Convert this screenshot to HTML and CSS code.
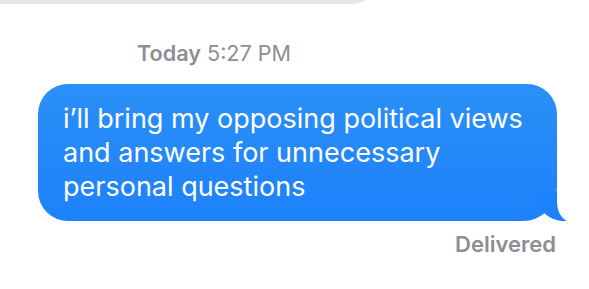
FILE: index.html
```html
<!DOCTYPE html>
<html>
<head>
<meta charset="utf-8">
<link rel="stylesheet" href="styles.css">
</head>
<body>
<div class="thread">
  <div class="prev-wrap"><div class="prev"></div></div>
  <div class="stamp"><b>Today</b> 5:27 PM</div>
  <div class="row">
    <div class="bubble">
      <p class="text">i’ll bring my opposing political views and answers for unnecessary personal questions</p>
      <svg class="tail" width="30" height="30" viewBox="0 0 30 30"><path d="M8 0 L18 0 L18 10 C18 20 22 27 28 30 C21 30.6 12 28.5 5 22 L0 10 Z" fill="#1d81fb"/></svg>
    </div>
  </div>
  <div class="status">Delivered</div>
</div>
</body>
</html>
```
FILE: styles.css
```css
html, body {
  margin: 0;
  background: #ffffff;
}
.thread {
  width: 589px;
  height: 289px;
  overflow: hidden;
  font-family: "Inter", "Liberation Sans", sans-serif;
}
.prev-wrap {
  height: 4px;
  overflow: hidden;
  display: flex;
  align-items: flex-end;
}
.prev {
  flex: none;
  width: 378px;
  height: 40px;
  background: #e6e6eb;
  border-bottom-right-radius: 26px;
}
.stamp {
  margin-top: 37px;
  padding-left: 137px;
  font-size: 21.6px;
  line-height: 24px;
  color: #8e8e93;
}
.stamp b {
  font-weight: 600;
}
.row {
  margin-top: 19px;
  padding-left: 38px;
}
.bubble {
  position: relative;
  width: 519px;
  box-sizing: border-box;
  padding: 18px 18px 17px 25px;
  border-radius: 30px 30px 34px 30px;
  background: linear-gradient(#2b8ff6, #1d81fb);
}
.text {
  margin: 0;
  font-size: 27px;
  line-height: 34px;
  color: #ffffff;
}
.tail {
  position: absolute;
  right: -12px;
  bottom: 0;
}
.status {
  margin-top: 10px;
  padding-right: 33px;
  text-align: right;
  font-size: 22px;
  line-height: 26px;
  font-weight: 600;
  color: #8e8e93;
}
```
